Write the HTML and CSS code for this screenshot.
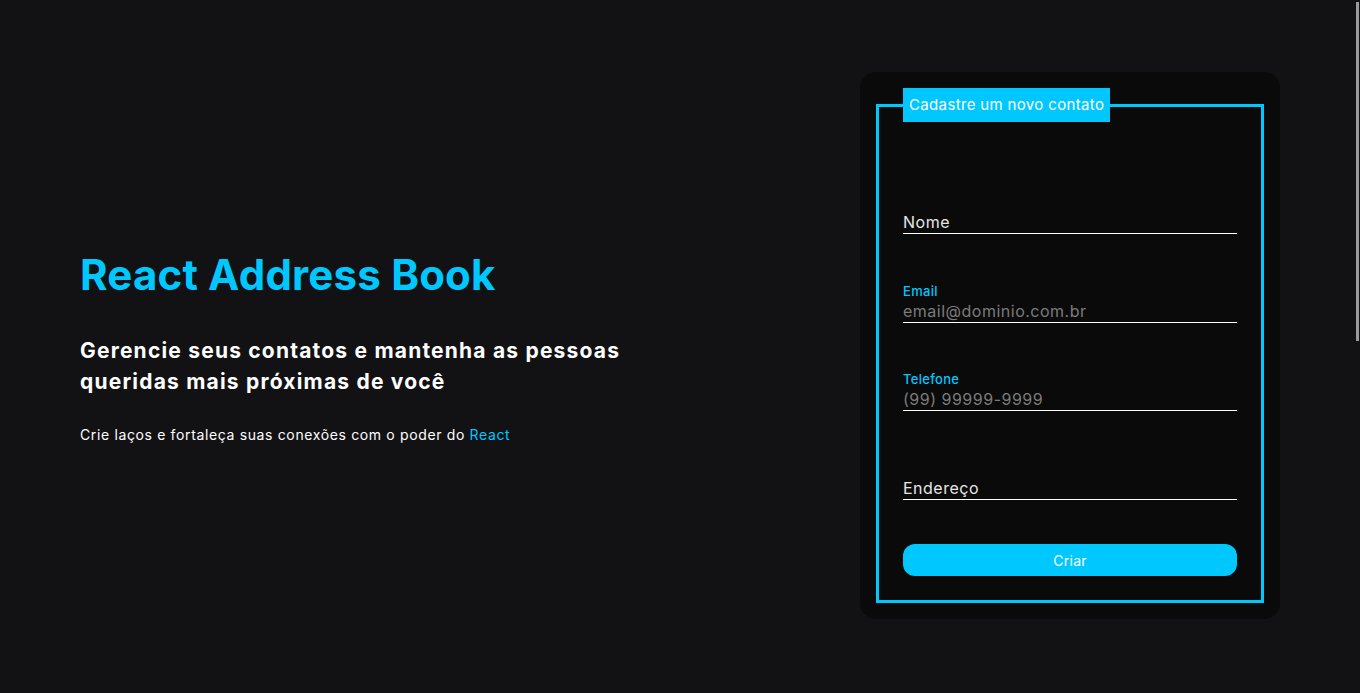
FILE: index.html
```html
<!DOCTYPE html>
<html lang="pt-BR">
<head>
<meta charset="utf-8">
<title>React Address Book</title>
<link rel="stylesheet" href="styles.css">
</head>
<body>
<main class="page">
  <section class="hero">
    <div class="intro">
      <h1 class="intro__title">React Address Book</h1>
      <h2 class="intro__subtitle">Gerencie seus contatos e mantenha as pessoas queridas mais próximas de você</h2>
      <p class="intro__text">Crie laços e fortaleça suas conexões com o poder do <span class="accent">React</span></p>
    </div>
    <div class="card">
      <form class="form">
        <fieldset class="form__set">
          <legend class="form__legend">Cadastre um novo contato</legend>
          <div class="field field--first">
            <label class="field__label field__label--rest" for="nome">Nome</label>
            <input class="field__input" id="nome" type="text">
          </div>
          <div class="field field--wide">
            <label class="field__label" for="email">Email</label>
            <input class="field__input" id="email" type="email" placeholder="email@dominio.com.br">
          </div>
          <div class="field">
            <label class="field__label" for="tel">Telefone</label>
            <input class="field__input" id="tel" type="tel" placeholder="(99) 99999-9999">
          </div>
          <div class="field field--wide">
            <label class="field__label field__label--rest" for="end">Endereço</label>
            <input class="field__input" id="end" type="text">
          </div>
          <button class="form__button" type="button">Criar</button>
        </fieldset>
      </form>
    </div>
  </section>
</main>
<div class="scroll-thumb" aria-hidden="true"></div>
</body>
</html>
```

FILE: styles.css
```css
* {
  box-sizing: border-box;
}

html {
  background: #121214;
}

body {
  margin: 0;
  background: #121214;
  color: #ffffff;
  font-family: "Inter", "Open Sans", sans-serif;
}

.scroll-thumb {
  position: fixed;
  top: 2px;
  right: 1px;
  width: 3px;
  height: 339px;
  background: #9a9a9a;
}

.page {
  width: 1200px;
  margin-left: 80px;
}

.hero {
  height: 691px;
  display: flex;
  align-items: center;
  justify-content: space-between;
}

.intro {
  width: 600px;
  padding-top: 4px;
}

.intro__title {
  margin: 0;
  color: #00c8ff;
  font-size: 42px;
  font-weight: 700;
  line-height: 48px;
  letter-spacing: 0.2px;
}

.intro__subtitle {
  margin: 36px 0 0;
  font-size: 21px;
  font-weight: 700;
  line-height: 31px;
  letter-spacing: 1.2px;
}

.intro__text {
  margin: 28px 0 0;
  font-size: 14px;
  line-height: 20px;
  letter-spacing: 0.64px;
}

.accent {
  color: #00c8ff;
}

.card {
  width: 420px;
  padding: 16px;
  background: #0a0a0a;
  border-radius: 16px;
}

.form__set {
  margin: 0;
  min-inline-size: 0;
  border: 3px solid #00c8ff;
  padding: 0 24px 24px;
  display: flex;
  flex-direction: column;
}

.form__legend {
  padding: 0 6px;
  height: 34px;
  line-height: 34px;
  background: #00c8ff;
  color: #ffffff;
  font-size: 15px;
  letter-spacing: 0.35px;
}

.field {
  position: relative;
  display: flex;
  flex-direction: column;
  height: 40px;
  margin-top: 48px;
}

.field--first {
  margin-top: 72px;
}

.field--wide {
  margin-top: 49px;
}

.field__label {
  display: block;
  height: 16px;
  font-size: 13px;
  line-height: 16px;
  color: #00c8ff;
  font-weight: 500;
  letter-spacing: 0.3px;
}

.field__label--rest {
  position: absolute;
  left: 0;
  bottom: 1px;
  height: 22px;
  line-height: 22px;
  font-size: 16px;
  font-weight: 400;
  color: #e6e6e6;
  letter-spacing: 0.5px;
}

.field__input {
  margin-top: auto;
  width: 100%;
  height: 24px;
  padding: 0;
  border: 0;
  border-bottom: 1px solid #ffffff;
  background: transparent;
  color: #ffffff;
  font-family: inherit;
  font-size: 16px;
  letter-spacing: 0.5px;
  outline: none;
}

.field__input::placeholder {
  color: #7c7c7c;
}

.form__button {
  margin-top: 44px;
  height: 32px;
  border: 0;
  border-radius: 12px;
  background: #00c8ff;
  color: #ffffff;
  font-family: inherit;
  font-size: 14px;
  letter-spacing: 0.3px;
}
```
